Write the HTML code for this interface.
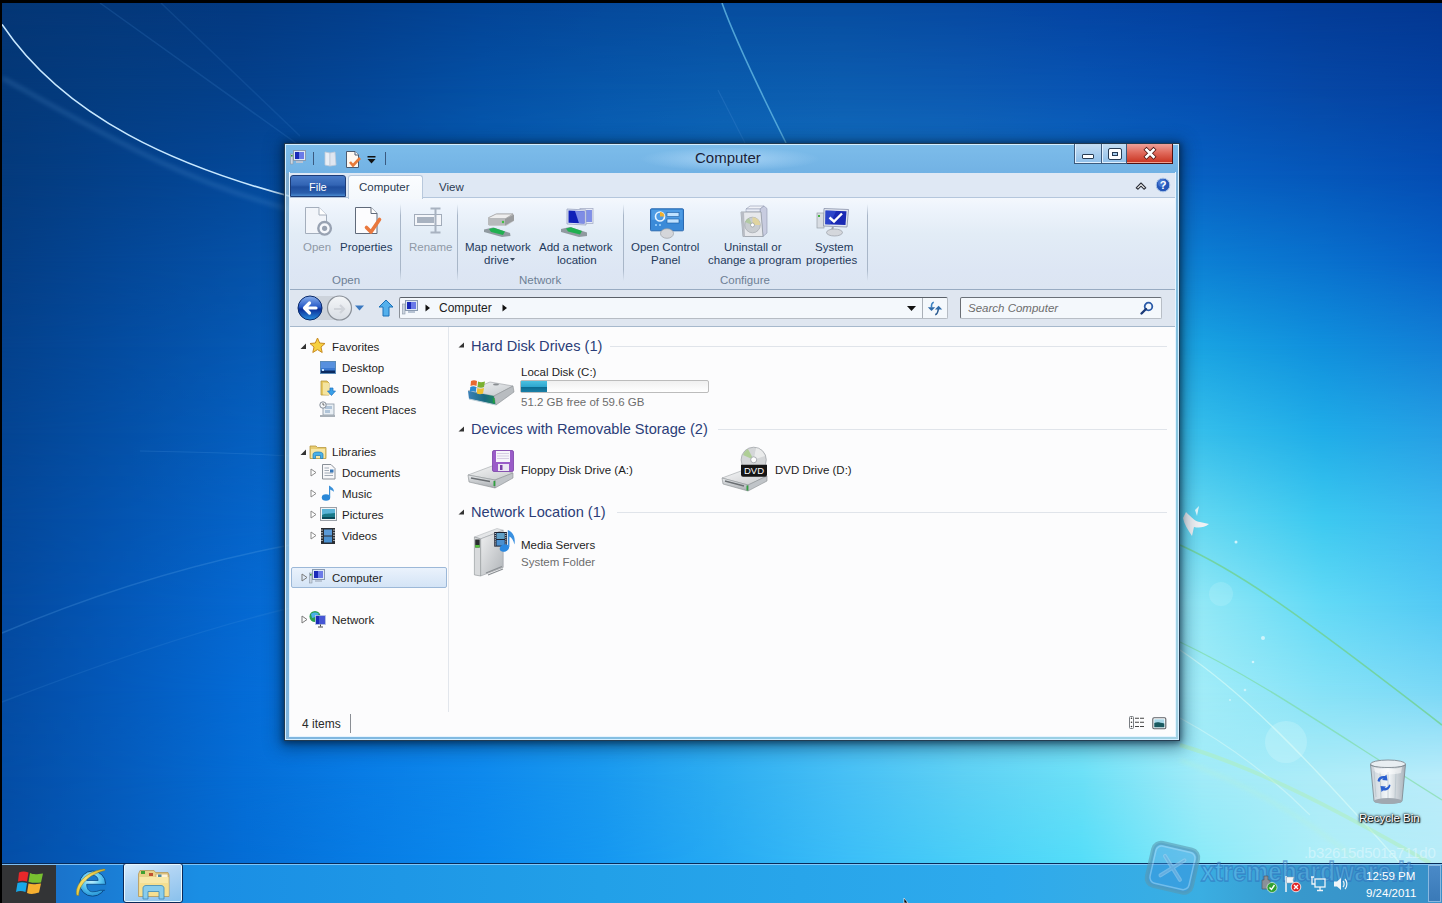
<!DOCTYPE html>
<html><head><meta charset="utf-8">
<style>
*{margin:0;padding:0;box-sizing:border-box}
html,body{width:1442px;height:903px;overflow:hidden}
body{position:relative;font-family:"Liberation Sans",sans-serif;background:#044ba2}
.a{position:absolute}
svg{position:absolute;overflow:visible}
#bg{left:0;top:0;width:1442px;height:903px;
background:
 radial-gradient(ellipse 1000px 700px at 1250px 850px, #6ee4fa 0%, #66daf6 25%, #3ab8f5 45%, #25b0ea 58%, #0d8bea 75%, #0a72cc 85%, rgba(6,76,166,1) 105%, rgba(4,75,160,0) 130%),
 linear-gradient(180deg,#043f8e 0%,#044ba2 40%,#0558b8 100%);
}
.t{position:absolute;white-space:nowrap;font-size:11.5px;color:#1e1e1e;line-height:14px}
.rb{color:#1e395b}
.dis{color:#8f99a6}
.grp{color:#6e7f95}
.nav{color:#1e1e1e}
.hd{font-size:14.6px;color:#2b3d78;line-height:14px}
.c{text-align:center;transform:translateX(-50%)}
</style></head><body>
<!--BG-->
<div class="a" style="left:0;top:0;width:1442px;height:903px;background:linear-gradient(90deg,#043675 2px,#04387b 122px,#033981 242px,#033e8b 362px,#034496 482px,#05499b 602px,#064d9f 722px,#074da0 842px,#0749a1 962px,#0444a2 1082px,#03409e 1202px,#033b96 1322px,#033791 1442px)"></div>
<div class="a" style="left:0;top:0;width:1442px;height:903px;background:linear-gradient(90deg,#043878 2px,#043d82 122px,#04408b 242px,#044798 362px,#0450a5 482px,#0757ab 602px,#0a5cae 722px,#0c5db0 842px,#0c59b1 962px,#0854b3 1082px,#054eb0 1202px,#0647a5 1322px,#0441a1 1442px);-webkit-mask-image:linear-gradient(180deg,transparent 3px,#000 89px);mask-image:linear-gradient(180deg,transparent 3px,#000 89px)"></div>
<div class="a" style="left:0;top:0;width:1442px;height:903px;background:linear-gradient(90deg,#043a7c 2px,#04418b 122px,#044899 242px,#0551a7 362px,#075cb3 482px,#0b65ba 602px,#106cbe 722px,#136fc0 842px,#136ec2 962px,#0d69c4 1082px,#0760c2 1202px,#0557ba 1322px,#044db3 1442px);-webkit-mask-image:linear-gradient(180deg,transparent 89px,#000 175px);mask-image:linear-gradient(180deg,transparent 89px,#000 175px)"></div>
<div class="a" style="left:0;top:0;width:1442px;height:903px;background:linear-gradient(90deg,#043d84 2px,#044797 122px,#0551a7 242px,#065bb5 362px,#0a67c0 482px,#1072c7 602px,#177ccb 722px,#1d83ce 842px,#1e86d1 962px,#1786d4 1082px,#0c7fd4 1202px,#0971ce 1322px,#0761c6 1442px);-webkit-mask-image:linear-gradient(180deg,transparent 175px,#000 261px);mask-image:linear-gradient(180deg,transparent 175px,#000 261px)"></div>
<div class="a" style="left:0;top:0;width:1442px;height:903px;background:linear-gradient(90deg,#04418c 2px,#044ca0 122px,#0558b3 242px,#0864c1 362px,#0d71cc 482px,#167fd2 602px,#208bd6 722px,#2a96da 842px,#2e9fdd 962px,#29a4e0 1082px,#19a3e2 1202px,#1090dd 1322px,#1380d6 1442px);-webkit-mask-image:linear-gradient(180deg,transparent 261px,#000 347px);mask-image:linear-gradient(180deg,transparent 261px,#000 347px)"></div>
<div class="a" style="left:0;top:0;width:1442px;height:903px;background:linear-gradient(90deg,#044492 2px,#0450a7 122px,#055ebe 242px,#096ccd 362px,#107ad6 482px,#1b89dc 602px,#2998e0 722px,#38a7e3 842px,#43b4e6 962px,#44bee9 1082px,#35beeb 1202px,#20ade8 1322px,#269fe4 1442px);-webkit-mask-image:linear-gradient(180deg,transparent 347px,#000 433px);mask-image:linear-gradient(180deg,transparent 347px,#000 433px)"></div>
<div class="a" style="left:0;top:0;width:1442px;height:903px;background:linear-gradient(90deg,#044799 2px,#0454b0 122px,#0563c8 242px,#0972d7 362px,#1282df 482px,#1e92e4 602px,#30a3e7 722px,#44b4ea 842px,#58c4ec 962px,#66d2ef 1082px,#62d7f1 1202px,#3cc9f0 1322px,#3eb9ef 1442px);-webkit-mask-image:linear-gradient(180deg,transparent 433px,#000 519px);mask-image:linear-gradient(180deg,transparent 433px,#000 519px)"></div>
<div class="a" style="left:0;top:0;width:1442px;height:903px;background:linear-gradient(90deg,#04499e 2px,#0458b8 122px,#0568d1 242px,#0977df 362px,#1287e6 482px,#1f98ea 602px,#33aaec 722px,#4dbcee 842px,#67cef0 962px,#80def3 1082px,#92e8f6 1202px,#63daf6 1322px,#53c9f4 1442px);-webkit-mask-image:linear-gradient(180deg,transparent 519px,#000 605px);mask-image:linear-gradient(180deg,transparent 519px,#000 605px)"></div>
<div class="a" style="left:0;top:0;width:1442px;height:903px;background:linear-gradient(90deg,#044ba2 2px,#045abc 122px,#046bd6 242px,#097ae4 362px,#1089eb 482px,#1d9aed 602px,#32adef 722px,#4dbff2 842px,#6ad1f2 962px,#83e2f5 1082px,#a1ecf8 1202px,#86e2f7 1322px,#7bd8f6 1442px);-webkit-mask-image:linear-gradient(180deg,transparent 605px,#000 691px);mask-image:linear-gradient(180deg,transparent 605px,#000 691px)"></div>
<div class="a" style="left:0;top:0;width:1442px;height:903px;background:linear-gradient(90deg,#044da5 2px,#055cbd 122px,#046dd6 242px,#087ce5 362px,#0e89ed 482px,#1999ef 602px,#2dadf1 722px,#46bff5 842px,#5dd0f4 962px,#6ce0f7 1082px,#a1ebf8 1202px,#aeecf8 1322px,#baecfa 1442px);-webkit-mask-image:linear-gradient(180deg,transparent 691px,#000 777px);mask-image:linear-gradient(180deg,transparent 691px,#000 777px)"></div>
<div class="a" style="left:0;top:0;width:1442px;height:903px;background:linear-gradient(90deg,#044ea7 2px,#045dbe 122px,#046dd5 242px,#077ce4 362px,#0b89ed 482px,#1597f0 602px,#26aaf3 722px,#3abdf7 842px,#48cef7 962px,#54ddf8 1082px,#89eaf8 1202px,#afeef8 1322px,#b7ecf8 1442px);-webkit-mask-image:linear-gradient(180deg,transparent 777px,#000 863px);mask-image:linear-gradient(180deg,transparent 777px,#000 863px)"></div>
<!--/BG-->


<svg style="left:0;top:0" width="1442" height="903" viewBox="0 0 1442 903">
<defs><filter id="bl2"><feGaussianBlur stdDeviation="2"/></filter><filter id="bl1"><feGaussianBlur stdDeviation=".6"/></filter><filter id="bl6"><feGaussianBlur stdDeviation="5"/></filter></defs>
<path d="M2.4,78 C92.7,127.3 181.3,182.7 300,212" fill="none" stroke="#6aa8e0" stroke-width="4" opacity=".22" filter="url(#bl2)"/>
<path d="M2,24.4 C65,118 176.8,167.2 300,199" fill="none" stroke="#c8e8ff" stroke-width="1.7" filter="url(#bl1)"/>
<path d="M100,3 L300,146" fill="none" stroke="#4a90d8" stroke-width="1.5" opacity=".18" filter="url(#bl1)"/>
<path d="M161,3 L300,136" fill="none" stroke="#4a90d8" stroke-width="1.5" opacity=".15" filter="url(#bl1)"/>
<path d="M2,633 C80,600 180,566 290,545" fill="none" stroke="#60a8e8" stroke-width="1.4" opacity=".25" filter="url(#bl1)"/><path d="M2,702 C90,668 190,632 290,608" fill="none" stroke="#60a8e8" stroke-width="1.4" opacity=".13" filter="url(#bl1)"/><path d="M140,451 C190,452 240,453 290,456" fill="none" stroke="#60a8e8" stroke-width="1" opacity=".18"/>
<path d="M722,3 C735,40 762,95 786,143" fill="none" stroke="#62b8e4" stroke-width="1.6" opacity=".8" filter="url(#bl1)"/><path d="M718,90 L745,143" fill="none" stroke="#4a90d8" stroke-width="1.2" opacity=".25"/>
<path d="M1180,545 C1240,572 1300,615 1442,725" fill="none" stroke="#70d088" stroke-width="1.6" opacity=".75"/>
<path d="M1180,642 C1260,680 1330,730 1442,800" fill="none" stroke="#78d890" stroke-width="1.3" opacity=".55"/>
<path d="M1180,650 C1240,690 1300,750 1400,863" fill="none" stroke="#e0fff8" stroke-width="1.4" opacity=".55"/>
<path d="M1180,718 C1230,745 1270,775 1310,815" fill="none" stroke="#e8fff8" stroke-width="1.2" opacity=".4"/>
<path d="M1180,745 C1250,766 1320,800 1430,863" fill="none" stroke="#b0f0b0" stroke-width="4" opacity=".45" filter="url(#bl1)"/>
<path d="M1180,760 C1250,785 1310,820 1360,863" fill="none" stroke="#c0f4c8" stroke-width="3" opacity=".3" filter="url(#bl2)"/>
<circle cx="1286" cy="742" r="21" fill="#e8ffff" opacity=".22"/>
<circle cx="1221" cy="594" r="12" fill="#e8ffff" opacity=".15"/>
<path d="M1186,512 C1192,518 1196,522 1200,522 L1209,524 C1204,528 1198,528 1194,527 L1192,536 C1188,530 1184,524 1183,518Z" fill="#fff4f4" opacity=".9"/>
<path d="M1195,510 L1199,506 L1197,516Z" fill="#fff" opacity=".8"/>
<circle cx="1236" cy="542" r="1.5" fill="#fff" opacity=".7"/>
<circle cx="1263" cy="638" r="2" fill="#fff" opacity=".6"/>
<circle cx="1253" cy="662" r="1.3" fill="#fff" opacity=".6"/>
<circle cx="1245" cy="690" r="1.3" fill="#fff" opacity=".5"/>
<circle cx="1230" cy="700" r="1" fill="#fff" opacity=".5"/>
</svg>
<!-- WINDOW -->
<div class="a" style="left:284px;top:143px;width:896px;height:598px;border:1px solid rgba(16,36,56,.85);background:rgba(165,202,222,.76);box-shadow:0 1px 6px 1px rgba(0,20,40,.55),0 3px 16px 4px rgba(0,30,60,.45)"></div>
<div class="a" style="left:285px;top:144px;width:894px;height:596px;border:1px solid #d4eeff"></div>
<!-- title bar -->
<div class="a" style="left:286px;top:145px;width:892px;height:28px;background:linear-gradient(180deg,#7cbcea,#72b2e4)"></div>
<div class="a" style="left:640px;top:148px;width:180px;height:22px;background:radial-gradient(ellipse 90px 12px at 50% 50%,rgba(200,230,255,.6),rgba(200,230,255,0))"></div>
<div class="t" style="left:695px;top:151px;font-size:15px;color:#1a1e38">Computer</div>
<!-- inner frame highlight -->
<div class="a" style="left:289px;top:172px;width:887px;height:565px;border:1px solid #e6f4ff;border-top:none"></div>
<!-- tab row -->
<div class="a" style="left:290px;top:173px;width:885px;height:25px;background:#dfe8f4"></div>
<!-- ribbon -->
<div class="a" style="left:290px;top:197px;width:885px;height:93px;border-top:1px solid #b4c6dc;border-bottom:1px solid #98abc2;background:linear-gradient(180deg,#f4f8fd 0%,#eef4fc 10%,#e2ecf6 40%,#dde6f4 80%,#dce5f2 100%)"></div>
<!-- address row -->
<div class="a" style="left:290px;top:290px;width:885px;height:37px;background:#dfe6f0;border-bottom:1px solid #a6b8cc"></div>
<!-- content -->
<div class="a" style="left:290px;top:327px;width:885px;height:409px;background:#fcfcfd"></div>

<!-- caption buttons -->
<div class="a" style="left:1074px;top:144px;width:27px;height:20px;border:1px solid #3c5a7c;border-top:none;border-right:none;background:linear-gradient(180deg,#c4dcf2,#8fc0ea);box-shadow:inset 1px 0 0 #e0f0ff,inset 0 -1px 0 #e0f0ff"></div>
<div class="a" style="left:1101px;top:144px;width:26px;height:20px;border:1px solid #3c5a7c;border-top:none;background:linear-gradient(180deg,#c4dcf2,#8fc0ea);box-shadow:inset 1px 0 0 #e0f0ff,inset 0 -1px 0 #e0f0ff"></div>
<div class="a" style="left:1127px;top:144px;width:46px;height:20px;border:1px solid #501010;border-top:none;border-left:none;background:linear-gradient(180deg,#eea098 0%,#e06a5c 45%,#c8321e 100%);box-shadow:inset 0 -1px 0 #f0a090"></div>
<div class="a" style="left:1082px;top:154px;width:12px;height:5px;background:#fff;border:1px solid #283c54;border-radius:1px"></div>
<div class="a" style="left:1109px;top:149px;width:12px;height:10px;border:3px solid #fff;outline:1px solid #283c54;border-radius:1px;box-shadow:inset 0 0 0 1px #283c54"></div>
<svg style="left:1143px;top:147px" width="14" height="13" viewBox="0 0 14 13"><path d="M3.5 2.8 L10.5 9.8 M10.5 2.8 L3.5 9.8" stroke="#4a1410" stroke-width="4.2" stroke-linecap="square"/><path d="M3.5 2.8 L10.5 9.8 M10.5 2.8 L3.5 9.8" stroke="#fff" stroke-width="2.7" stroke-linecap="square"/></svg>
<!-- ribbon min / help -->
<svg style="left:1135px;top:180px" width="12" height="10" viewBox="0 0 12 10"><path d="M1.2 7.8 L6 3 L10.8 7.8 L9 9.2 L6 6.2 L3 9.2Z" fill="#fff" stroke="#2a2e38" stroke-width="1.1" stroke-linejoin="round"/></svg>
<svg style="left:1155px;top:177px" width="16" height="16" viewBox="0 0 16 16"><circle cx="8" cy="8" r="6.8" fill="#2456b8" stroke="#a8c4e8" stroke-width="1"/><circle cx="7" cy="6" r="4" fill="#5a8ae0" opacity=".6"/><text x="8" y="12.3" font-size="11" font-weight="bold" fill="#fff" text-anchor="middle" font-family="Liberation Sans">?</text></svg>

<!-- quick access toolbar -->
<svg style="left:290px;top:150px" width="17" height="15" viewBox="0 0 17 15"><rect x="3.5" y="0.5" width="12" height="10" fill="#dde8f4" stroke="#8a9ab0"/><rect x="5" y="2" width="9" height="7" fill="#1a2ab8"/><rect x="9" y="2" width="5" height="7" fill="#6a7ae8"/><rect x="6" y="11" width="7" height="2" fill="#b8c4d4"/><rect x="0.5" y="4" width="2.5" height="10" fill="#cdd6e0" stroke="#8a98a8" stroke-width=".6"/><rect x="1" y="5" width="1.5" height="1.5" fill="#30a030"/></svg>
<div class="a" style="left:313px;top:152px;width:1px;height:13px;background:#3a5a80"></div>
<svg style="left:324px;top:151px" width="13" height="16" viewBox="0 0 13 16"><path d="M1 1 L6 2 L6 15 L1 14Z" fill="#e8eef6" stroke="#c0cad8" stroke-width=".8"/><path d="M6 2 L11 1 L12 14 L6 15Z" fill="#dfe6f0" stroke="#c0cad8" stroke-width=".8"/></svg>
<svg style="left:346px;top:151px" width="16" height="17" viewBox="0 0 16 17"><path d="M0.5 0.5 H9 L12.5 4 V16.5 H0.5Z" fill="#fdf8f2" stroke="#4a5a70"/><path d="M9 0.5 V4 H12.5" fill="#fff" stroke="#4a5a70"/><path d="M4 11 L7 14.5 L14 7" fill="none" stroke="#e87a3a" stroke-width="2.6"/></svg>
<svg style="left:367px;top:156px" width="9" height="8" viewBox="0 0 9 8"><rect x="0.5" y="0" width="8" height="1.5" fill="#111"/><path d="M0.5 3 H8.5 L4.5 7.5Z" fill="#111"/></svg>
<div class="a" style="left:385px;top:152px;width:1px;height:13px;background:#3a5a80"></div>

<!-- tabs -->
<div class="a" style="left:290px;top:175px;width:56px;height:22px;border-radius:3px 3px 0 0;border:1px solid #1c3c78;background:linear-gradient(180deg,#4a7cc8 0%,#3264b4 45%,#1f4e9e 55%,#2a5eac 85%,#4a8ad0 100%)"></div>
<div class="t" style="left:309px;top:180px;color:#fff;font-size:11px">File</div>
<div class="a" style="left:348px;top:175px;width:75px;height:24px;border:1px solid #b8c8dc;border-bottom:none;border-radius:3px 3px 0 0;background:linear-gradient(180deg,#fbfdff,#f4f8fc)"></div>
<div class="t" style="left:359px;top:180px;color:#2a3a52">Computer</div>
<div class="t" style="left:439px;top:180px;color:#2a3a52">View</div>

<!-- ribbon contents -->
<svg style="left:304px;top:206px" width="30" height="30" viewBox="0 0 30 30"><path d="M1.5 1.5 H15 L22.5 9 V27.5 H1.5Z" fill="#f2f5fa" stroke="#a4aebc"/><path d="M15 1.5 V9 H22.5" fill="#fff" stroke="#a4aebc"/><circle cx="20.6" cy="22.3" r="6.3" fill="#f6f8fc" stroke="#98a2b2" stroke-width="2.4"/><circle cx="20.6" cy="22.3" r="2.6" fill="#98a2b2"/></svg>
<svg style="left:354px;top:206px" width="30" height="30" viewBox="0 0 30 30"><path d="M1.5 1.5 H17 L23 7.5 V27.5 H1.5Z" fill="#fcfcfe" stroke="#606a7a"/><path d="M17 1.5 V7.5 H23" fill="#fff" stroke="#606a7a"/><path d="M12.5 21.5 L17 26 L25.5 13.5" fill="none" stroke="#e9783e" stroke-width="3.6" stroke-linecap="round" stroke-linejoin="round"/></svg>
<div class="t dis" style="left:303px;top:240px">Open</div>
<div class="t rb" style="left:340px;top:240px">Properties</div>
<div class="t grp" style="left:332px;top:273px">Open</div>
<div class="a" style="left:400px;top:204px;width:1px;height:77px;background:linear-gradient(180deg,rgba(160,176,196,0),#a8b6c8 15%,#a8b6c8 85%,rgba(160,176,196,0))"></div>
<svg style="left:413px;top:207px" width="32" height="28" viewBox="0 0 32 28"><rect x="1.5" y="7.5" width="27" height="11" fill="#f4f6fa" stroke="#a2acba"/><rect x="4" y="10" width="17" height="6" fill="#a8b2c0"/><path d="M17.5 1.5 H27.5 M22.5 1.5 V25.5 M17.5 25.5 H27.5" fill="none" stroke="#a8b2c0" stroke-width="2"/></svg>
<div class="t dis" style="left:409px;top:240px">Rename</div>
<div class="a" style="left:457px;top:204px;width:1px;height:77px;background:linear-gradient(180deg,rgba(160,176,196,0),#a8b6c8 15%,#a8b6c8 85%,rgba(160,176,196,0))"></div>
<!-- map network drive -->
<svg style="left:483px;top:212px" width="34" height="27" viewBox="0 0 34 27"><path d="M6 5 L14 1.5 H30 L31 4 V9 L23 14 H6 L5 11Z" fill="#c8cacc"/><path d="M5 6 L13 2 H30 L22 7 H6Z" fill="#eeeeee" stroke="#9a9a9a" stroke-width=".7"/><path d="M5 6 H22 V13 H5Z" fill="#b8babc"/><path d="M22 7 L31 2.5 V8.5 L22 13.5Z" fill="#9a9c9e"/><circle cx="20" cy="10" r="1.2" fill="#40c040"/><path d="M1 17.5 L10 15.5 L27 21 L27.5 24 L19 25 L1 20Z" fill="#909aa0"/><path d="M6 17 L11 15.8 L22 19.5 L20 23 L8 20Z" fill="#20b050"/></svg>
<div class="t rb" style="left:465px;top:240px">Map network</div>
<div class="t rb" style="left:484px;top:253px">drive</div>
<svg style="left:510px;top:258px" width="6" height="4" viewBox="0 0 6 4"><path d="M0 0 H5 L2.5 3Z" fill="#3a4a60"/></svg>
<!-- add network location -->
<svg style="left:560px;top:207px" width="35" height="32" viewBox="0 0 35 32"><rect x="20" y="1.5" width="13" height="15" fill="#e6eaf6" stroke="#a8b0c8" stroke-width=".8"/><rect x="21.5" y="3" width="10" height="12" fill="#2a40d0"/><rect x="26" y="3" width="5.5" height="12" fill="#8090e8"/><path d="M7 2 L26 3 L26 18 L7 17Z" fill="#dfe4f4" stroke="#9aa4c0" stroke-width=".8"/><path d="M8.5 3.5 L24.5 4.3 V16.5 L8.5 15.7Z" fill="#1020b8"/><path d="M15 4 L24.5 4.3 V16.5 L19 16.2Z" fill="#9aa8f0" opacity=".8"/><path d="M1 22 L10 20 L27 25.5 L27 29 L19 30 L1 25Z" fill="#909aa0"/><path d="M6 21.5 L11 20.3 L22 24 L20 27.5 L8 24.5Z" fill="#20b050"/></svg>
<div class="t rb" style="left:539px;top:240px">Add a network</div>
<div class="t rb" style="left:557px;top:253px">location</div>
<div class="t grp" style="left:519px;top:273px">Network</div>
<div class="a" style="left:623px;top:204px;width:1px;height:77px;background:linear-gradient(180deg,rgba(160,176,196,0),#a8b6c8 15%,#a8b6c8 85%,rgba(160,176,196,0))"></div>
<!-- control panel -->
<svg style="left:650px;top:208px" width="34" height="31" viewBox="0 0 34 31"><rect x="0.5" y="0.8" width="33" height="22" rx="1" fill="#3a8ad8" stroke="#2a68b0"/><rect x="1.5" y="1.8" width="31" height="10" fill="#5aa6ec" opacity=".6"/><circle cx="10" cy="8.5" r="4.5" fill="none" stroke="#e8f4ff" stroke-width="1.6"/><path d="M10 4 A4.5 4.5 0 0 1 14.5 8.5 H10Z" fill="#f0b030"/><rect x="17" y="4.5" width="12" height="4" fill="#bfe2ff" stroke="#1a5aa0" stroke-width=".6"/><rect x="17" y="11" width="12" height="4" fill="#bfe2ff" stroke="#1a5aa0" stroke-width=".6"/><circle cx="6" cy="17" r="1" fill="#a0d4ff"/><circle cx="10" cy="17" r="1" fill="#a0d4ff"/><ellipse cx="17" cy="25.5" rx="6.5" ry="4.8" fill="#d4d6da" stroke="#9a9ea4" stroke-width=".7"/></svg>
<div class="t rb" style="left:631px;top:240px">Open Control</div>
<div class="t rb" style="left:651px;top:253px">Panel</div>
<!-- uninstall -->
<svg style="left:739px;top:205px" width="30" height="33" viewBox="0 0 30 33"><path d="M7 4 L11 1 H25 L21 4Z" fill="#f0f2f8" stroke="#9098b0" stroke-width=".6"/><path d="M21 4 L25 1 L28 3.5 V28 L24 31.5Z" fill="#c8cce0" stroke="#9098b0" stroke-width=".6"/><path d="M7 4 H21 V7 H7Z" fill="#e8ecf6" stroke="#9098b0" stroke-width=".5"/><path d="M2 7 H22 L24 31.5 H4Z" fill="#e6e8ec" stroke="#8a909a" stroke-width=".7"/><path d="M2 7 H5 L6 31.5 H4Z" fill="#b8bcc4"/><circle cx="13.5" cy="20" r="7.8" fill="#c8ccd0" stroke="#9aa0a6" stroke-width=".6"/><path d="M13.5 12.2 A7.8 7.8 0 0 1 21.3 20 H13.5Z" fill="#e0d4a0"/><path d="M6 17 A7.8 7.8 0 0 1 10 13 L13.5 20Z" fill="#a8c890" opacity=".7"/><circle cx="13.5" cy="20" r="2" fill="#fff" stroke="#8a9096" stroke-width=".6"/></svg>
<div class="t rb" style="left:724px;top:240px">Uninstall or</div>
<div class="t rb" style="left:708px;top:253px">change a program</div>
<!-- system properties -->
<svg style="left:816px;top:207px" width="34" height="30" viewBox="0 0 34 30"><rect x="1" y="6" width="7" height="15" fill="#d8dce2" stroke="#98a0a8" stroke-width=".7"/><rect x="2" y="8" width="2" height="2" fill="#40b040"/><path d="M8 1.5 L32.5 2.5 L31 20 L7.5 19Z" fill="#e4e8f0" stroke="#8890a8" stroke-width=".8"/><path d="M9.5 3.5 L30.5 4.3 L29.5 18 L9.2 17.2Z" fill="#1a2ab4"/><path d="M9.5 3.5 L20 4 L14 17.4 L9.2 17.2Z" fill="#3a58d8" opacity=".6"/><path d="M13.5 10.5 L18 14.5 L26 6.5" fill="none" stroke="#fff" stroke-width="2.4"/><path d="M17 20 L16 23" stroke="#a0a4aa" stroke-width="2"/><ellipse cx="18.5" cy="25.5" rx="8" ry="3.5" fill="#d4d7dc" stroke="#9a9ea6" stroke-width=".7"/></svg>
<div class="t rb" style="left:815px;top:240px">System</div>
<div class="t rb" style="left:806px;top:253px">properties</div>
<div class="t grp" style="left:720px;top:273px">Configure</div>
<div class="a" style="left:867px;top:204px;width:1px;height:77px;background:linear-gradient(180deg,rgba(160,176,196,0),#a8b6c8 15%,#a8b6c8 85%,rgba(160,176,196,0))"></div>

<!-- ADDRESS ROW -->
<svg style="left:294px;top:293px" width="80" height="30" viewBox="0 0 80 30"><defs><linearGradient id="bk" x1="0" y1="0" x2="0" y2="1"><stop offset="0" stop-color="#8ab0ec"/><stop offset=".45" stop-color="#2a5cc8"/><stop offset=".55" stop-color="#0a2e98"/><stop offset="1" stop-color="#2a90e0"/></linearGradient><linearGradient id="fw" x1="0" y1="0" x2="0" y2="1"><stop offset="0" stop-color="#f4f6f8"/><stop offset="1" stop-color="#d8dde4"/></linearGradient></defs><path d="M16 3 H45 C50 3 52 5 54 8 L42 27 H16Z" fill="#c8ced6" opacity=".8"/><circle cx="45.5" cy="15" r="12" fill="url(#fw)" stroke="#8a9098" stroke-width="1.2"/><path d="M40 16 H50 M46 12 L50 16 L46 20" fill="none" stroke="#d0d4da" stroke-width="2.2"/><circle cx="16" cy="15" r="12" fill="url(#bk)" stroke="#0a2a6a" stroke-width="1"/><path d="M22 15 H11 M15.5 10 L10.5 15 L15.5 20" fill="none" stroke="#fff" stroke-width="3.2" stroke-linecap="round" stroke-linejoin="round"/></svg>
<svg style="left:355px;top:305px" width="9" height="6" viewBox="0 0 9 6"><path d="M0 0.5 H9 L4.5 5.5Z" fill="#3a78c0"/></svg>
<svg style="left:378px;top:299px" width="16" height="18" viewBox="0 0 16 18"><path d="M8 1 L15 8 H11 V17 H5 V8 H1Z" fill="#54b0ec" stroke="#1a70b8" stroke-width="1"/></svg>
<div class="a" style="left:399px;top:297px;width:549px;height:22px;background:#f4f8fc;border:1px solid #b6bcc4;border-top-color:#5a6068;border-left-color:#8a9098;border-radius:2px"></div>
<svg style="left:402px;top:300px" width="17" height="15" viewBox="0 0 17 15"><rect x="3.5" y="0.5" width="12" height="10" fill="#dde8f4" stroke="#8a9ab0"/><rect x="5" y="2" width="9" height="7" fill="#1a2ab8"/><rect x="9" y="2" width="5" height="7" fill="#6a7ae8"/><rect x="6" y="11" width="7" height="2" fill="#b8c4d4"/><rect x="0.5" y="4" width="2.5" height="10" fill="#cdd6e0" stroke="#8a98a8" stroke-width=".6"/></svg>
<svg style="left:425px;top:304px" width="6" height="8" viewBox="0 0 6 8"><path d="M0.5 0.5 L5 4 L0.5 7.5Z" fill="#111"/></svg>
<div class="t" style="left:439px;top:301px;font-size:12px;color:#1a1a1a">Computer</div>
<svg style="left:502px;top:304px" width="6" height="8" viewBox="0 0 6 8"><path d="M0.5 0.5 L5 4 L0.5 7.5Z" fill="#111"/></svg>
<svg style="left:907px;top:306px" width="9" height="5" viewBox="0 0 9 5"><path d="M0 0 H9 L4.5 5Z" fill="#111"/></svg>
<div class="a" style="left:922px;top:298px;width:1px;height:20px;background:#aab0b8"></div>
<svg style="left:927px;top:300px" width="16" height="16" viewBox="0 0 16 16"><path d="M6.8 2.2 C5 2.6 4.3 4.5 4.5 7.5" fill="none" stroke="#3a80c0" stroke-width="1.6"/><path d="M0.8 7.3 H8.2 L4.5 11Z" fill="#2e6aa8"/><path d="M8.2 14.6 C10 14.2 11 12.5 11.3 9" fill="none" stroke="#2a5a90" stroke-width="1.6"/><path d="M7.9 9.6 H15.2 L11.6 5.8Z" fill="#2e6aa8"/></svg>
<div class="a" style="left:960px;top:297px;width:202px;height:22px;background:#f4f8fc;border:1px solid #b8bec6;border-top-color:#6a7078;border-left-color:#6a6e74;border-radius:2px"></div>
<div class="t" style="left:968px;top:301px;font-style:italic;color:#6d6d6d">Search Computer</div>
<svg style="left:1140px;top:301px" width="14" height="14" viewBox="0 0 14 14"><circle cx="8.5" cy="5.5" r="3.8" fill="none" stroke="#2a5aa8" stroke-width="1.8"/><path d="M6 8 L1.5 12.5" stroke="#1a3a78" stroke-width="2.4" stroke-linecap="round"/></svg>

<!-- NAV PANE -->
<div class="a" style="left:448px;top:327px;width:1px;height:385px;background:#e2e6ec"></div>
<svg style="left:300px;top:343px" width="7" height="7" viewBox="0 0 7 7"><path d="M6 0.5 V6 H0.5Z" fill="#333"/></svg>
<svg style="left:309px;top:337px" width="17" height="17" viewBox="0 0 17 17"><path d="M8.5 1 L10.7 6 L16 6.5 L12 10 L13.2 15.5 L8.5 12.6 L3.8 15.5 L5 10 L1 6.5 L6.3 6Z" fill="#f6d040" stroke="#c88a20" stroke-width="1"/></svg>
<div class="t nav" style="left:332px;top:340px">Favorites</div>
<svg style="left:320px;top:361px" width="16" height="13" viewBox="0 0 16 13"><rect x="0.5" y="0.5" width="15" height="12" fill="#3a78d0" stroke="#5a8ab8"/><rect x="1" y="1" width="14" height="6" fill="#6aa0e8" opacity=".6"/><rect x="1" y="9.5" width="14" height="2.5" fill="#0a2a60"/><rect x="2" y="8" width="2" height="2" fill="#bfe0ff"/></svg>
<div class="t nav" style="left:342px;top:361px">Desktop</div>
<svg style="left:320px;top:380px" width="17" height="17" viewBox="0 0 17 17"><path d="M1 1 H7 L9 3 V15 H1Z" fill="#e8c860" stroke="#b89a40" stroke-width=".8"/><path d="M3 2.5 L9 3 V15 L3 14.5Z" fill="#f4e4a0"/><path d="M10 8 H13 V11 H15.5 L11.5 15.5 L7.5 11 H10Z" fill="#3aa0e8" stroke="#1a70c0" stroke-width=".7"/></svg>
<div class="t nav" style="left:342px;top:382px">Downloads</div>
<svg style="left:319px;top:401px" width="17" height="17" viewBox="0 0 17 17"><rect x="4" y="3" width="11" height="11" fill="#e8eef4" stroke="#8a96a4" stroke-width=".8"/><rect x="6" y="5" width="7" height="3" fill="#b0c4d8"/><rect x="6" y="9" width="5" height="3" fill="#b0c4d8"/><circle cx="4" cy="4" r="3.2" fill="#f4f6f8" stroke="#6a7480" stroke-width=".8"/><path d="M4 2 V4 H5.5" fill="none" stroke="#333" stroke-width=".7"/><path d="M1 14 H16 V16 H1Z" fill="#a8b0b8"/></svg>
<div class="t nav" style="left:342px;top:403px">Recent Places</div>

<svg style="left:300px;top:449px" width="7" height="7" viewBox="0 0 7 7"><path d="M6 0.5 V6 H0.5Z" fill="#333"/></svg>
<svg style="left:309px;top:444px" width="18" height="16" viewBox="0 0 18 16"><path d="M1 2 H7 L8.5 3.5 H17 V14.5 H1Z" fill="#e8cc70" stroke="#b89840" stroke-width=".8"/><rect x="2" y="5" width="14" height="9" fill="#f6e6a6"/><path d="M4 14.5 V10.5 C4 8.5 6 8 9 8 C12 8 14 8.5 14 10.5 V14.5 H11.5 V11.5 H6.5 V14.5Z" fill="#4ab0e8" stroke="#1a78b8" stroke-width=".7"/></svg>
<div class="t nav" style="left:332px;top:445px">Libraries</div>
<svg style="left:310px;top:468px" width="7" height="9" viewBox="0 0 7 9"><path d="M1 1 L6 4.5 L1 8Z" fill="#fff" stroke="#8a8a8a" stroke-width="1"/></svg>
<svg style="left:321px;top:463px" width="16" height="17" viewBox="0 0 16 17"><path d="M1.5 1.5 H10 L14 5.5 V16 H1.5Z" fill="#f8f8fa" stroke="#8a9098"/><path d="M3.5 5 H8 M3.5 7.5 H8 M3.5 10 H12 M3.5 12.5 H12" stroke="#9aa4b0" stroke-width=".9"/><rect x="9" y="6.5" width="3.5" height="3" fill="#3a78b8"/></svg>
<div class="t nav" style="left:342px;top:466px">Documents</div>
<svg style="left:310px;top:489px" width="7" height="9" viewBox="0 0 7 9"><path d="M1 1 L6 4.5 L1 8Z" fill="#fff" stroke="#8a8a8a" stroke-width="1"/></svg>
<svg style="left:321px;top:484px" width="15" height="17" viewBox="0 0 15 17"><ellipse cx="5" cy="13.5" rx="4.2" ry="3.2" fill="#2a88d8"/><path d="M8 13 V1.5 C10 3 13 4 13 8 C12 6.5 10 6 9.2 5.5 V13Z" fill="#3a90d8"/></svg>
<div class="t nav" style="left:342px;top:487px">Music</div>
<svg style="left:310px;top:510px" width="7" height="9" viewBox="0 0 7 9"><path d="M1 1 L6 4.5 L1 8Z" fill="#fff" stroke="#8a8a8a" stroke-width="1"/></svg>
<svg style="left:320px;top:507px" width="17" height="15" viewBox="0 0 17 15"><rect x="0.5" y="0.5" width="16" height="13" fill="#f2f4f6" stroke="#9aa0a8"/><rect x="2" y="2" width="13" height="10" fill="#5ab4d8"/><path d="M2 8 C5 6 8 7 15 6 V12 H2Z" fill="#1a7a8a"/><path d="M2 10 H15 V12 H2Z" fill="#0a4a5a"/></svg>
<div class="t nav" style="left:342px;top:508px">Pictures</div>
<svg style="left:310px;top:531px" width="7" height="9" viewBox="0 0 7 9"><path d="M1 1 L6 4.5 L1 8Z" fill="#fff" stroke="#8a8a8a" stroke-width="1"/></svg>
<svg style="left:321px;top:528px" width="14" height="16" viewBox="0 0 14 16"><rect x="0" y="0" width="14" height="16" fill="#2a2e34"/><rect x="3" y="1.5" width="8" height="6" fill="#5a9ad8"/><rect x="3" y="8.5" width="8" height="6" fill="#4a90d0"/><path d="M1 1.5 V14.5 M13 1.5 V14.5" stroke="#e8eaec" stroke-width="1.2" stroke-dasharray="1.2 1.4"/></svg>
<div class="t nav" style="left:342px;top:529px">Videos</div>

<div class="a" style="left:291px;top:567px;width:156px;height:21px;border:1px solid #9cb8d8;border-radius:2px;background:linear-gradient(180deg,#eaf2fc,#d4e4f6)"></div>
<svg style="left:301px;top:573px" width="7" height="9" viewBox="0 0 7 9"><path d="M1 1 L6 4.5 L1 8Z" fill="none" stroke="#7a7a7a" stroke-width="1"/></svg>
<svg style="left:309px;top:569px" width="17" height="15" viewBox="0 0 17 15"><rect x="3.5" y="0.5" width="12" height="10" fill="#dde8f4" stroke="#8a9ab0"/><rect x="5" y="2" width="9" height="7" fill="#1a2ab8"/><rect x="9" y="2" width="5" height="7" fill="#6a7ae8"/><rect x="6" y="11" width="7" height="2" fill="#b8c4d4"/><rect x="0.5" y="4" width="2.5" height="10" fill="#cdd6e0" stroke="#8a98a8" stroke-width=".6"/><rect x="1" y="5" width="1.5" height="1.5" fill="#30a030"/></svg>
<div class="t nav" style="left:332px;top:571px">Computer</div>

<svg style="left:301px;top:615px" width="7" height="9" viewBox="0 0 7 9"><path d="M1 1 L6 4.5 L1 8Z" fill="none" stroke="#7a7a7a" stroke-width="1"/></svg>
<svg style="left:309px;top:610px" width="18" height="18" viewBox="0 0 18 18"><circle cx="6" cy="6.5" r="5.5" fill="#2aa050"/><path d="M2 4 C4 2 8 2 10 4 C8 5 6 8 3 8Z" fill="#4ab0e8"/><rect x="6.5" y="5.5" width="10" height="9" fill="#1a2ab8" stroke="#c0cce0" stroke-width=".8"/><rect x="10" y="6" width="6" height="8" fill="#5a6ae0" opacity=".7"/><path d="M11.5 14.5 V16.5 M9 17 H14" stroke="#444" stroke-width="1"/></svg>
<div class="t nav" style="left:332px;top:613px">Network</div>

<!-- CONTENT -->
<svg style="left:458px;top:342px" width="7" height="6" viewBox="0 0 7 6"><path d="M6 0.5 V5.5 H0.5Z" fill="#333"/></svg>
<div class="t hd" style="left:471px;top:339px">Hard Disk Drives (1)</div>
<div class="a" style="left:610px;top:346px;width:557px;height:1px;background:#e0e4ea"></div>
<svg style="left:467px;top:377px" width="48" height="30" viewBox="0 0 48 30"><defs><linearGradient id="ldf" x1="0" y1="0" x2="1" y2="0"><stop offset="0" stop-color="#3a80b8"/><stop offset=".6" stop-color="#1a6a80"/><stop offset="1" stop-color="#208a60"/></linearGradient><linearGradient id="ldt" x1="0" y1="0" x2="1" y2="1"><stop offset="0" stop-color="#f0f2f4"/><stop offset="1" stop-color="#c4c8cc"/></linearGradient></defs><path d="M1 14 L23 5 L46 9 L27 19Z" fill="url(#ldt)" stroke="#9a9ea2" stroke-width=".6"/><path d="M1 14 L27 19 L29 28 L2 22Z" fill="url(#ldf)"/><path d="M27 19 L46 9 L47 15 L29 28Z" fill="#b8bcc0" stroke="#8a8e92" stroke-width=".6"/><path d="M2 22 L29 28" stroke="#c0d0d8" stroke-width="1"/><rect x="26" y="21" width="1.6" height="5" fill="#20a040"/><ellipse cx="29" cy="7.5" rx="3" ry="1" fill="#8a8e92"/><path d="M4 4 C6 3 8 3 10 4 L9.5 9 C7.5 8 5.5 8 3.5 9Z" fill="#e86a30"/><path d="M11 4.5 C13 5.5 15 5.5 18 4.5 L17 10 C15 11 13 11 10.5 10Z" fill="#7ab030"/><path d="M3.3 10 C5.3 9 7.3 9 9.3 10 L8.8 15 C6.8 14 4.8 14 2.8 15Z" fill="#2a88d0"/><path d="M10.3 11 C12.3 12 14.3 12 17 11 L16 16.5 C14 17.5 12 17.5 9.8 16.5Z" fill="#f0c030"/></svg>
<div class="t" style="left:521px;top:365px">Local Disk (C:)</div>
<div class="a" style="left:520px;top:380px;width:189px;height:13px;border:1px solid #bcbcbc;border-radius:2px;background:linear-gradient(180deg,#f0f0f0,#fff)"></div>
<div class="a" style="left:521px;top:381px;width:26px;height:11px;background:linear-gradient(180deg,#4ac0e0 0%,#30a8d0 50%,#0a6a90 55%,#1a80a8 100%)"></div>
<div class="t" style="left:521px;top:395px;color:#6d6d6d">51.2 GB free of 59.6 GB</div>

<svg style="left:458px;top:426px" width="7" height="6" viewBox="0 0 7 6"><path d="M6 0.5 V5.5 H0.5Z" fill="#333"/></svg>
<div class="t hd" style="left:471px;top:422px">Devices with Removable Storage (2)</div>
<div class="a" style="left:718px;top:429px;width:449px;height:1px;background:#e0e4ea"></div>
<svg style="left:466px;top:448px" width="50" height="44" viewBox="0 0 50 44"><defs><linearGradient id="dtop" x1="0" y1="0" x2="1" y2="1"><stop offset="0" stop-color="#f4f5f6"/><stop offset="1" stop-color="#c8cacc"/></linearGradient><linearGradient id="dfr" x1="0" y1="0" x2="0" y2="1"><stop offset="0" stop-color="#e8eaec"/><stop offset="1" stop-color="#a8acb0"/></linearGradient></defs><path d="M2 27 L26 18 L47 25 L29 32Z" fill="url(#dtop)" stroke="#a0a4a8" stroke-width=".6"/><path d="M2 27 L29 32 L29 40 L3 34Z" fill="url(#dfr)" stroke="#8a8e92" stroke-width=".6"/><path d="M5 30 L24 33.5" stroke="#6a6e72" stroke-width="1.3"/><path d="M29 32 L47 25 L47 30 L29 40Z" fill="#c0c4c8" stroke="#8a8e92" stroke-width=".6"/><rect x="27.5" y="33" width="1.8" height="5" fill="#30a040"/><rect x="26.5" y="2.5" width="21" height="21" rx="1.5" fill="#9a5cc8" stroke="#7a40a8" stroke-width=".8"/><rect x="30" y="3" width="14" height="11" fill="#f6f4fa"/><path d="M31 5.5 H43 M31 8 H43 M31 10.5 H43" stroke="#c8bcd8" stroke-width=".7"/><rect x="32" y="16" width="11" height="7" fill="#ece6f4"/><rect x="34" y="17" width="2.5" height="5" fill="#7a40a8"/></svg>
<div class="t" style="left:521px;top:463px">Floppy Disk Drive (A:)</div>
<svg style="left:720px;top:446px" width="50" height="47" viewBox="0 0 50 47"><path d="M2 32 L21 25 L47 30 L28 39Z" fill="url(#dtop)" stroke="#a0a4a8" stroke-width=".6"/><path d="M2 32 L28 39 L28 45 L3 38Z" fill="url(#dfr)" stroke="#8a8e92" stroke-width=".6"/><path d="M5 35 L24 40" stroke="#6a6e72" stroke-width="1.3"/><path d="M28 39 L47 30 L47 35 L28 45Z" fill="#c0c4c8" stroke="#8a8e92" stroke-width=".6"/><rect x="26.5" y="39.5" width="1.8" height="5" fill="#30a040"/><circle cx="33.7" cy="13.8" r="12.6" fill="#d4d6d8" stroke="#9a9ea2" stroke-width=".7"/><path d="M23 9 A12.6 12.6 0 0 1 28 3 L33.7 13.8Z" fill="#90c860" opacity=".55"/><path d="M36 2 A12.6 12.6 0 0 1 45 10 L33.7 13.8Z" fill="#f4f4f4" opacity=".7"/><circle cx="33.7" cy="13.8" r="3" fill="#fff" stroke="#9a9ea4" stroke-width=".8"/><path d="M21 18.7 H47 V28.5 Q47 30.7 45 30.7 H23 Q21 30.7 21 28.5Z" fill="#151515"/><text x="34" y="28.2" font-size="9.5" fill="#fff" text-anchor="middle" font-family="Liberation Sans">DVD</text></svg>
<div class="t" style="left:775px;top:463px">DVD Drive (D:)</div>

<svg style="left:458px;top:509px" width="7" height="6" viewBox="0 0 7 6"><path d="M6 0.5 V5.5 H0.5Z" fill="#333"/></svg>
<div class="t hd" style="left:471px;top:505px">Network Location (1)</div>
<div class="a" style="left:617px;top:512px;width:550px;height:1px;background:#e0e4ea"></div>
<svg style="left:472px;top:528px" width="46" height="50" viewBox="0 0 46 50"><defs><linearGradient id="msd" x1="0" y1="0" x2="1" y2="1"><stop offset="0" stop-color="#f0f1f2"/><stop offset="1" stop-color="#b0b4b8"/></linearGradient></defs><path d="M2.4 9 L25 0.5 L31.2 2.2 L8.6 10.9Z" fill="#e4e6e8" stroke="#a8acb0" stroke-width=".5"/><path d="M8.6 10.9 L31.2 2.2 V39.4 L8.6 48Z" fill="url(#msd)" stroke="#9a9ea2" stroke-width=".6"/><path d="M2.4 9 L8.6 10.9 V48 L2.4 46.9Z" fill="#d8dadc" stroke="#8a8e92" stroke-width=".6"/><rect x="3.2" y="11.5" width="4.5" height="8" fill="#2a2e30"/><rect x="3.2" y="17" width="4.5" height="2.5" fill="#58c040"/><path d="M14 45 L30 38.5 M16 47 L31 41" stroke="#8a8e92" stroke-width="1.2"/><rect x="22.2" y="4" width="12.7" height="14.6" fill="#1a2030"/><rect x="24.5" y="5" width="8.2" height="6" fill="#60a0c8"/><rect x="24.5" y="12" width="8.2" height="5.6" fill="#4a90d0"/><path d="M23.3 5 V18 M33.8 5 V18" stroke="#e8ecf0" stroke-width="1" stroke-dasharray="1 1.1"/><ellipse cx="32.4" cy="20" rx="4.8" ry="3.6" fill="#2a88e0" transform="rotate(-20 32.4 20)"/><path d="M35.8 19 V2 C40 4 44 8 42.4 16.5 C41.5 12 39.5 9.5 37.4 8.5 V19Z" fill="#3a90e0"/></svg>
<div class="t" style="left:521px;top:538px">Media Servers</div>
<div class="t" style="left:521px;top:555px;color:#6d6d6d">System Folder</div>

<!-- STATUS BAR -->
<div class="t" style="left:302px;top:717px;color:#2a2a2a;font-size:12px">4 items</div>
<div class="a" style="left:350px;top:714px;width:1px;height:19px;background:#8a8e94"></div>
<svg style="left:1128px;top:716px" width="17" height="13" viewBox="0 0 17 13"><rect x="1.5" y="0.5" width="4" height="12" rx="1" fill="#fff" stroke="#6a6e74" stroke-width=".9"/><circle cx="3.5" cy="2.3" r=".8" fill="#333"/><circle cx="3.5" cy="6.3" r=".8" fill="#333"/><circle cx="3.5" cy="10.5" r=".8" fill="#333"/><path d="M7 2.3 H11 M12 2.3 H16 M7 6.3 H11 M12 6.3 H16 M7 10.5 H11 M12 10.5 H16" stroke="#444" stroke-width="1.1"/></svg>
<svg style="left:1152px;top:717px" width="15" height="13" viewBox="0 0 15 13"><rect x="0.8" y="0.8" width="13" height="11" rx="1.2" fill="#fff" stroke="#5a5e64" stroke-width="1.1"/><rect x="2.3" y="2.3" width="10" height="8" fill="#a8d8e8"/><path d="M2.3 6 C5 4.5 8 5.5 12.3 6.5 V10.3 H2.3Z" fill="#1a5a60"/></svg>

<!-- TASKBAR -->
<div class="a" style="left:0;top:863px;width:1442px;height:40px;background:linear-gradient(90deg,#1470c8 0px,#1a74cc 60px,#1a8ee4 200px,#22a0e8 600px,#2eaaec 1000px,#3aaee2 1200px,#3898cc 1300px,#3890c8 1442px);border-top:1px solid #082a58"></div>
<div class="a" style="left:0;top:864px;width:1442px;height:1px;background:rgba(150,210,255,.8)"></div>
<div class="a" style="left:2px;top:865px;width:54px;height:38px;background:#333436"></div>
<svg style="left:15px;top:870px" width="30" height="27" viewBox="0 0 30 27"><path d="M4 2.5 C7 1 10 1 13.5 2.5 L12 11.5 C9 10.5 6 10.5 3 11.5Z" fill="#e8282a"/><path d="M15 3 C18 4.5 21 4.5 28 3.5 L26 12.5 C21 13 18 13 13.5 12Z" fill="#78c030"/><path d="M2.5 13 C5.5 12 8.5 12 12 13 L10.5 22 C7 20.5 4 20.5 1 22Z" fill="#18a8e8"/><path d="M13.5 13.5 C17 14.5 20 14.5 26 13.5 L24 22.5 C19 24 16 24.5 12 23Z" fill="#f8b030"/></svg>
<svg style="left:75px;top:866px" width="32" height="32" viewBox="0 0 32 32"><defs><radialGradient id="ie" cx=".45" cy=".35" r=".7"><stop offset="0" stop-color="#c8f4ff"/><stop offset=".55" stop-color="#58c4f0"/><stop offset="1" stop-color="#1a88d0"/></radialGradient><linearGradient id="iey" x1="0" y1="1" x2="1" y2="0"><stop offset="0" stop-color="#e8c838"/><stop offset=".5" stop-color="#f8e070"/><stop offset="1" stop-color="#d8b020"/></linearGradient></defs><ellipse cx="17.6" cy="17.6" rx="13" ry="12.6" fill="url(#ie)" stroke="#0a4a88" stroke-width="1"/><path d="M11.7 14.5 C11.7 11 14.5 9.2 17.4 9.2 C20.5 9.2 23.1 11 23.1 14.5Z" fill="#1a78cc" stroke="#0a4a88" stroke-width=".8"/><path d="M11.7 18.3 H31.5 V24.3 H25 C23 25.3 20.5 25.8 17.8 25.8 C14 25.8 11.7 22.8 11.7 18.3Z" fill="#1a7ccf"/><path d="M30.6 18.3 H11.7 C11.7 22.8 14 25.8 17.8 25.8 C20.5 25.8 23 25.3 25 24.3 H30" fill="none" stroke="#0a4a88" stroke-width=".8"/><path d="M1.7 29.2 C-0.5 20 9 6 28.8 3 C30.3 2.8 30.8 3.9 29.6 4.6 C13 8.5 3.5 20 3.8 29.6Z" fill="url(#iey)" stroke="#8a7a20" stroke-width=".5"/></svg>
<div class="a" style="left:123px;top:863px;width:60px;height:40px;border:1px solid #0a2858;border-radius:3px;background:linear-gradient(160deg,#d8ecfc 0%,#b0d4f4 40%,#88c0ec 100%);box-shadow:inset 0 0 0 1px #e8f8ff"></div>
<svg style="left:137px;top:869px" width="33" height="31" viewBox="0 0 33 31"><path d="M1.5 5 L3 1.5 H17 L18.5 3.5 H31 L32 6 V27.5 H1.5Z" fill="#e8d088" stroke="#b89858" stroke-width=".8"/><rect x="4" y="2" width="4" height="3" fill="#40a030"/><rect x="12" y="4" width="4" height="3" fill="#c05030"/><path d="M19 5 H31 V9 H19Z" fill="#fff4d8" stroke="#b89858" stroke-width=".6"/><rect x="21" y="5.5" width="3.5" height="3" fill="#508aa0"/><rect x="2.5" y="8" width="29" height="19" fill="#f8e8a8"/><path d="M2.5 14 H31.5 V27 H2.5Z" fill="#f4dc88" opacity=".7"/><path d="M6 30 V19 C6 17.5 7.5 16.5 9 16.5 H24 C25.5 16.5 27 17.5 27 19 V30 H22 V22.5 H11 V30Z" fill="#88ccec" stroke="#3a88b8" stroke-width=".8"/></svg>

<!-- watermark -->
<svg style="left:1138px;top:838px" width="70" height="64" viewBox="0 0 70 64"><g transform="rotate(13 35 32)"><rect x="11" y="8" width="46" height="44" rx="8" fill="#3a90dc" fill-opacity=".45" stroke="#5a98b0" stroke-opacity=".6" stroke-width="4"/><rect x="14" y="11" width="40" height="38" rx="6" fill="none" stroke="#b8e0f8" stroke-opacity=".45" stroke-width="1.5"/><path d="M24 20 L44 40 M44 20 L24 40" stroke="#a8d4f0" stroke-opacity=".5" stroke-width="4" stroke-linecap="round"/><path d="M24 20 L44 40 M44 20 L24 40" stroke="#5aa0d8" stroke-opacity=".5" stroke-width="1.6" stroke-linecap="round"/></g></svg>
<svg style="left:1195px;top:845px" width="230" height="45" viewBox="1195 845 230 45"><text x="1201" y="881" font-family="Liberation Sans" font-size="28" font-weight="bold" textLength="212" lengthAdjust="spacingAndGlyphs" fill="#8ac8f4" fill-opacity=".3" stroke="#2a6ab8" stroke-opacity=".55" stroke-width="1.3">xtremehardware.it</text></svg>
<div class="a" style="left:1304px;top:844px;font-size:15px;line-height:17px;color:rgba(230,250,255,.55);white-space:nowrap;letter-spacing:-.3px">.b32615d501a711d0</div>

<!-- tray -->
<svg style="left:1260px;top:875px" width="18" height="18" viewBox="0 0 18 18"><path d="M4 1 H8 V5 H10 V14 H2 V5 H4Z" fill="#8a9098" stroke="#4a5058" stroke-width=".6"/><circle cx="12" cy="12.5" r="5" fill="#30a030" stroke="#fff" stroke-width=".6"/><path d="M9.5 12.5 L11.5 14.5 L14.5 10" fill="none" stroke="#fff" stroke-width="1.4"/></svg>
<svg style="left:1284px;top:875px" width="18" height="18" viewBox="0 0 18 18"><path d="M2 1 V17" stroke="#f0f4f8" stroke-width="1.5"/><path d="M2.5 2 H10 L9 5 L10 8 H2.5Z" fill="#f4f6f8" stroke="#90a0b0" stroke-width=".5"/><circle cx="12" cy="12" r="4.8" fill="#e02828" stroke="#fff" stroke-width=".8"/><path d="M10 10 L14 14 M14 10 L10 14" stroke="#fff" stroke-width="1.3"/></svg>
<svg style="left:1310px;top:876px" width="16" height="16" viewBox="0 0 16 16"><rect x="5" y="3" width="10" height="8" fill="none" stroke="#f0f4f8" stroke-width="1.3"/><path d="M2 1 V8 H5 M10 11 V14 M7 14.5 H13 M1 1 H4" stroke="#f0f4f8" stroke-width="1.3" fill="none"/></svg>
<svg style="left:1333px;top:876px" width="16" height="16" viewBox="0 0 16 16"><path d="M1 5.5 H4 L8 2 V14 L4 10.5 H1Z" fill="#f0f4f8"/><path d="M10 5 C11.5 6.5 11.5 9.5 10 11 M12 3 C14.5 5.5 14.5 10.5 12 13" fill="none" stroke="#f0f4f8" stroke-width="1.2"/></svg>
<div class="t" style="left:1366px;top:869px;color:#fff;font-size:11.5px">12:59 PM</div>
<div class="t" style="left:1366px;top:886px;color:#fff;font-size:11.5px">9/24/2011</div>
<div class="a" style="left:1428px;top:865px;width:13px;height:37px;border:1px solid #8ab8e0;background:linear-gradient(180deg,#4a8ac8,#3a7ab8)"></div>

<!-- recycle bin -->
<svg style="left:1368px;top:759px" width="40" height="48" viewBox="0 0 40 48"><defs><linearGradient id="rbg" x1="0" x2="1"><stop offset="0" stop-color="#c8d0d8"/><stop offset=".5" stop-color="#f4f8fa"/><stop offset="1" stop-color="#a8b0b8"/></linearGradient></defs><ellipse cx="20" cy="5" rx="17.5" ry="4" fill="#e8eef2" stroke="#8a949c" stroke-width="1"/><path d="M2.5 5.5 L6 42 C6 45 34 45 34 42 L37.5 5.5 C37.5 9.5 2.5 9.5 2.5 5.5Z" fill="url(#rbg)" stroke="#7a848c" stroke-width=".8"/><path d="M6 12 L8 38 M12 13 L13 40 M20 13 V40 M28 13 L27 40 M34 12 L32 38" stroke="#b8c4cc" stroke-width=".8"/><ellipse cx="20" cy="42" rx="14" ry="3" fill="#a0a8b0"/><path d="M9.5 22 C10 18 13 16.5 17 17 L18.5 15.5 L19.5 21.5 L14 21 L15.5 19.5 C13 19.5 12 21 11.5 23Z" fill="#2a60d0"/><path d="M22.5 26 C22 30 19 32 15 31.5 L13.5 33 L12.5 27 L18 27.5 L16.5 29 C19 29 20.5 27.5 21 25.5Z" fill="#2a60d0"/><path d="M6 8 C12 11 26 11 34 8 L33 14 C26 16 12 16 7 13Z" fill="#fff" opacity=".55"/></svg>
<div class="a" style="left:1359px;top:811px;font-size:11.5px;line-height:14px;color:#fff;white-space:nowrap;text-shadow:0 0 2px #000,1px 1px 1px #000,0 0 3px #000">Recycle Bin</div>
<svg style="left:903px;top:898px" width="8" height="5" viewBox="0 0 8 5"><path d="M1 0 L1 5 L5 5Z" fill="#000" stroke="#fff" stroke-width=".6"/></svg>
<div class="a" style="left:0;top:0;width:1442px;height:3px;background:#000"></div>
<div class="a" style="left:0;top:0;width:2px;height:903px;background:#000"></div>
</body></html>
